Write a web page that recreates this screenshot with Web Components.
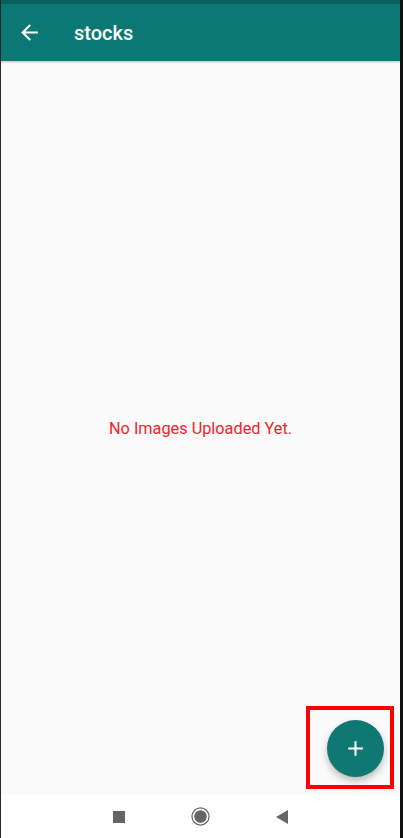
<!DOCTYPE html>
<html lang="en">
<head>
<meta charset="UTF-8">
<title>stocks</title>
<style>
  html, body { margin: 0; height: 100%; background: #fff; }
  body { font-family: Roboto, "Liberation Sans", sans-serif; }
</style>
</head>
<body>
<stock-screen>
  <app-bar title="stocks"></app-bar>
  <empty-note>No Images Uploaded Yet.</empty-note>
  <add-fab slot="fab"></add-fab>
  <nav-bar slot="nav"></nav-bar>
</stock-screen>

<script>
  class StockScreen extends HTMLElement {
    constructor() {
      super();
      this.attachShadow({ mode: "open" }).innerHTML = `
        <style>
          :host { display: flex; width: 403px; height: 838px; box-sizing: border-box;
            border-left: 1px solid #2a2a2a; border-right: 3px solid #111; }
          .col { flex: 1; min-width: 0; display: flex; flex-direction: column; position: relative; background: #fff; }
          main { flex: 1; min-height: 0; display: flex; flex-direction: column; background: #fafafa; }
          .fab { position: absolute; right: 6px; top: 706px; }
        </style>
        <div class="col">
          <main><slot></slot></main>
          <slot name="nav"></slot>
          <div class="fab"><slot name="fab"></slot></div>
        </div>`;
    }
  }

  class AppBar extends HTMLElement {
    constructor() {
      super();
      this.attachShadow({ mode: "open" }).innerHTML = `
        <style>
          :host { display: block; background: #0b7873; color: #fff; box-shadow: 0 1px 2px rgba(0,0,0,.25); }
          .status { height: 4px; background: #095f5c; }
          .bar { height: 57px; display: flex; align-items: center; gap: 32px; padding: 0 0 0 16px; }
          svg { width: 25px; height: 25px; display: block; }
          h1 { margin: 0; padding-top: 1px; font: 500 20px Roboto, sans-serif; letter-spacing: 0; }
        </style>
        <div class="status"></div>
        <div class="bar">
          <svg viewBox="0 0 24 24" fill="#fff"><path d="M20 11H7.83l5.59-5.59L12 4l-8 8 8 8 1.41-1.41L7.83 13H20v-2z"/></svg>
          <h1>${this.getAttribute("title")}</h1>
        </div>`;
    }
  }

  class EmptyNote extends HTMLElement {
    constructor() {
      super();
      this.attachShadow({ mode: "open" }).innerHTML = `
        <style>
          :host { flex: 1; display: flex; align-items: center; justify-content: center;
            color: #f5222d; font: 400 16.3px Roboto, sans-serif; }
        </style>
        <slot></slot>`;
    }
  }

  class AddFab extends HTMLElement {
    constructor() {
      super();
      this.attachShadow({ mode: "open" }).innerHTML = `
        <style>
          :host { display: block; width: 88px; height: 83px; box-sizing: border-box;
            border: 4px solid #f00; padding: 10px 0 0 17px; }
          button { width: 57px; height: 57px; border: 0; padding: 0; border-radius: 50%; background: #107873;
            display: flex; align-items: center; justify-content: center;
            box-shadow: 0 4px 7px rgba(0,0,0,.25); }
          svg { width: 25px; height: 25px; display: block; }
        </style>
        <button aria-label="Add">
          <svg viewBox="0 0 24 24" fill="#fff"><path d="M19 13h-6v6h-2v-6H5v-2h6V5h2v6h6v2z"/></svg>
        </button>`;
    }
  }

  class NavBar extends HTMLElement {
    constructor() {
      super();
      this.attachShadow({ mode: "open" }).innerHTML = `
        <style>
          :host { display: flex; height: 43px; background: #fff; align-items: center;
            justify-content: center; gap: 66px; padding-right: 1px; }
          svg { display: block; }
        </style>
        <svg width="12" height="12" viewBox="0 0 12 12"><rect width="12" height="12" fill="#666"/></svg>
        <svg width="19" height="19" viewBox="0 0 20 20">
          <circle cx="10" cy="10" r="9" fill="none" stroke="#666" stroke-width="1.3"/>
          <circle cx="10" cy="10" r="6.6" fill="#666"/>
        </svg>
        <svg width="12" height="14" viewBox="0 0 12 14"><path d="M12 0v14L0 7z" fill="#666"/></svg>`;
    }
  }

  customElements.define("stock-screen", StockScreen);
  customElements.define("app-bar", AppBar);
  customElements.define("empty-note", EmptyNote);
  customElements.define("add-fab", AddFab);
  customElements.define("nav-bar", NavBar);
</script>
</body>
</html>
